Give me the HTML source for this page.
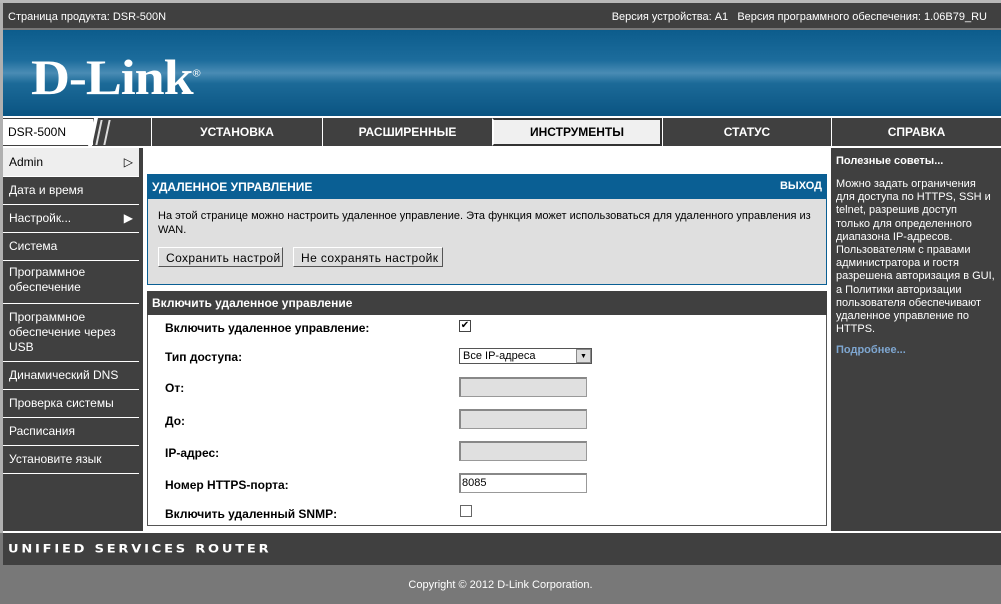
<!DOCTYPE html>
<html><head><meta charset="utf-8"><style>
*{margin:0;padding:0;box-sizing:border-box}
body{width:1001px;height:604px;background:#787878;font-family:"Liberation Sans",Tahoma,sans-serif;font-size:11px;color:#000;position:relative;overflow:hidden}
.a{position:absolute}
.w{color:#fff}
.tab{position:absolute;top:118px;height:28px;background:#404040;color:#fff;font-weight:bold;font-size:12px;text-align:center;line-height:28px;border-left:1px solid #fff}
.side{position:absolute;left:3px;width:136px;background:#404040;color:#fff;font-size:12px;padding:4px 6px;line-height:15px;border-bottom:1px solid #fff}
.lbl{position:absolute;left:165px;font-weight:bold;font-size:12px}
.inp{position:absolute;left:459px;width:128px;height:20px;background:#e0e0e0;border:1px solid #999;border-top:2px solid #888;border-left:2px solid #888}
</style></head><body>
<div class="a" style="left:0;top:0;width:1001px;height:3px;background:#b8b8b8"></div>
<div class="a" style="left:0;top:3px;width:3px;height:530px;background:#b0b0b0"></div>
<div class="a w" style="left:3px;top:3px;width:998px;height:25px;background:#404040"></div>
<div class="a w" style="left:8px;top:11px">Страница продукта: DSR-500N</div>
<div class="a w" style="right:14px;top:11px;white-space:nowrap">Версия устройства: A1&nbsp;&nbsp;&nbsp;Версия программного обеспечения: 1.06B79_RU</div>
<div class="a" style="left:3px;top:30px;width:998px;height:86px;background:linear-gradient(180deg,#0c5c8c 0%,#1c6c9c 35%,#4a8cb4 50%,#1c6a98 62%,#0a5482 100%)"></div>
<div class="a" style="left:31px;top:48px;font-family:'Liberation Serif',serif;font-weight:bold;font-size:50px;color:#fff;letter-spacing:-1px;transform:scaleX(1.08);transform-origin:left">D-Link<sup style="font-size:10px;font-family:'Liberation Sans';font-weight:normal">®</sup></div>
<div class="a" style="left:3px;top:116px;width:998px;height:2px;background:#fff"></div>
<div class="a" style="left:3px;top:118px;width:148px;height:28px;background:#404040"></div>
<div class="a" style="left:3px;top:119px;width:90px;height:26px;background:#fff;font-size:12px;padding:6px 5px">DSR-500N</div>
<div class="a" style="left:91px;top:118px;width:4px;height:28px;background:#fff;transform:skewX(-12deg)"></div>
<div class="a" style="left:98px;top:120px;width:2px;height:25px;background:#ddd;transform:skewX(-12deg)"></div>
<div class="a" style="left:106px;top:120px;width:2px;height:25px;background:#ddd;transform:skewX(-12deg)"></div>
<div class="tab" style="left:151px;width:171px">УСТАНОВКА</div>
<div class="tab" style="left:322px;width:170px">РАСШИРЕННЫЕ</div>
<div class="tab" style="left:492px;width:170px;background:#f0f0f0;color:#000;border:2px solid #333;border-left:2px solid #fff;line-height:24px">ИНСТРУМЕНТЫ</div>
<div class="tab" style="left:662px;width:169px">СТАТУС</div>
<div class="tab" style="left:831px;width:170px">СПРАВКА</div>
<div class="a" style="left:3px;top:146px;width:998px;height:2px;background:#fff"></div>
<div class="a" style="left:3px;top:148px;width:137px;height:383px;background:#404040"></div>
<div class="side" style="top:148px;height:29px;background:#eee;color:#000;padding-top:7px">Admin<span style="float:right">▷</span></div>
<div class="side" style="top:177px;height:28px;padding-top:6px">Дата и время</div>
<div class="side" style="top:205px;height:28px;padding-top:6px">Настройк...<span style="float:right">▶</span></div>
<div class="side" style="top:233px;height:28px;padding-top:6px">Система</div>
<div class="side" style="top:261px;height:43px">Программное<br>обеспечение</div>
<div class="side" style="top:304px;height:58px;padding-top:6px">Программное<br>обеспечение через<br>USB</div>
<div class="side" style="top:362px;height:28px;padding-top:6px">Динамический DNS</div>
<div class="side" style="top:390px;height:28px;padding-top:6px">Проверка системы</div>
<div class="side" style="top:418px;height:28px;padding-top:6px">Расписания</div>
<div class="side" style="top:446px;height:28px;padding-top:6px">Установите язык</div>
<div class="a" style="left:140px;top:148px;width:691px;height:383px;background:#fff;border-left:3px solid #404040"></div>
<div class="a" style="left:147px;top:174px;width:680px;height:111px;background:#dfdfdf;border:1px solid #0a5f94"></div>
<div class="a w" style="left:147px;top:174px;width:680px;height:25px;background:#0a5f94;font-weight:bold;font-size:12px;padding:6px 5px">УДАЛЕННОЕ УПРАВЛЕНИЕ<span style="float:right;font-size:11px">ВЫХОД</span></div>
<div class="a" style="left:158px;top:209px;width:665px;line-height:14px">На этой странице можно настроить удаленное управление. Эта функция может использоваться для удаленного управления из WAN.</div>
<div class="a" style="left:158px;top:247px;width:125px;height:20px;background:#ddd;border:1px solid #555;border-top-color:#fff;border-left-color:#fff;font-size:12px;padding:3px 7px;letter-spacing:.4px;white-space:nowrap;overflow:hidden">Сохранить настрой</div>
<div class="a" style="left:293px;top:247px;width:150px;height:20px;background:#ddd;border:1px solid #555;border-top-color:#fff;border-left-color:#fff;font-size:12px;padding:3px 7px;letter-spacing:.4px;white-space:nowrap;overflow:hidden">Не сохранять настройк</div>
<div class="a" style="left:147px;top:291px;width:680px;height:235px;border:1px solid #555"></div>
<div class="a w" style="left:147px;top:291px;width:680px;height:24px;background:#404040;font-weight:bold;font-size:12px;padding:5px 5px">Включить удаленное управление</div>
<div class="lbl" style="top:321px">Включить удаленное управление:</div>
<div class="a" style="left:459px;top:320px;width:12px;height:12px;border:1px solid #444;background:#fff;font-size:10px;line-height:10px;text-align:center">✔</div>
<div class="lbl" style="top:350px">Тип доступа:</div>
<div class="a" style="left:459px;top:348px;width:133px;height:16px;border:1px solid #555;background:#fff;font-size:11px;padding:1px 3px">Все IP-адреса<span class="a" style="right:0;top:0;width:15px;height:14px;background:#ddd;border:1px solid #888;font-size:7px;text-align:center;line-height:13px">▼</span></div>
<div class="lbl" style="top:381px">От:</div>
<div class="inp" style="top:377px"></div>
<div class="lbl" style="top:414px">До:</div>
<div class="inp" style="top:409px"></div>
<div class="lbl" style="top:446px">IP-адрес:</div>
<div class="inp" style="top:441px"></div>
<div class="lbl" style="top:478px">Номер HTTPS-порта:</div>
<div class="inp" style="top:473px;background:#fff;font-size:11px;padding:2px 0 0 1px">8085</div>
<div class="lbl" style="top:507px">Включить удаленный SNMP:</div>
<div class="a" style="left:460px;top:505px;width:12px;height:12px;border:1px solid #666;background:#fff"></div>
<div class="a" style="left:831px;top:148px;width:170px;height:383px;background:#404040"></div>
<div class="a w" style="left:836px;top:155px;font-weight:bold">Полезные советы...</div>
<div class="a w" style="left:836px;top:178px;width:165px;line-height:13.2px;white-space:nowrap">Можно задать ограничения<br>для доступа по HTTPS, SSH и<br>telnet, разрешив доступ<br>только для определенного<br>диапазона IP-адресов.<br>Пользователям с правами<br>администратора и гостя<br>разрешена авторизация в GUI,<br>а Политики авторизации<br>пользователя обеспечивают<br>удаленное управление по<br>HTTPS.</div>
<div class="a" style="left:836px;top:344px;font-weight:bold;color:#7ea6d0">Подробнее...</div>
<div class="a" style="left:3px;top:531px;width:998px;height:34px;background:#404040;border-top:2px solid #fff"></div>
<div class="a w" style="left:8px;top:542px;font-weight:bold;font-size:13px;letter-spacing:2.8px;font-family:'DejaVu Sans',sans-serif;transform:scaleY(.85)">UNIFIED SERVICES ROUTER</div>
<div class="a w" style="left:0;top:579px;width:1001px;text-align:center">Copyright © 2012 D-Link Corporation.</div>
</body></html>
